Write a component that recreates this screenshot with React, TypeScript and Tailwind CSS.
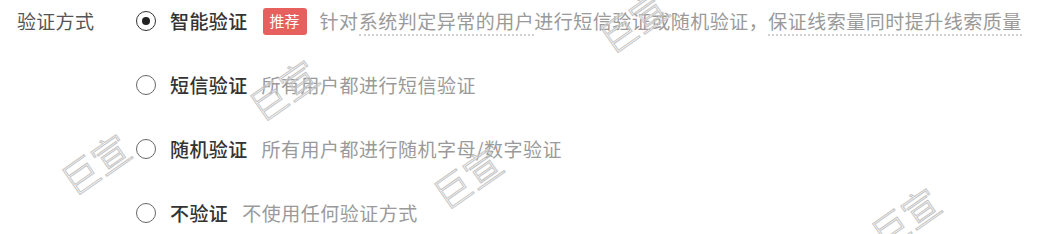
import React, {type ReactElement} from 'react';

type Option = {
    label: string;
    desc: React.ReactNode;
    checked?: boolean;
    badge?: string;
};

const Dotted = ({children}: {children: React.ReactNode}) => (
    <span className="border-b-2 border-dotted border-[#cfcfcf]">{children}</span>
);

const options: Option[] = [
    {
        label: '智能验证',
        checked: true,
        badge: '推荐',
        desc: (
            <>
                针对<Dotted>系统判定异常的用户</Dotted>进行短信验证或随机验证，
                <Dotted>保证线索量同时提升线索质量</Dotted>
            </>
        ),
    },
    {label: '短信验证', desc: '所有用户都进行短信验证'},
    {label: '随机验证', desc: '所有用户都进行随机字母/数字验证'},
    {label: '不验证', desc: '不使用任何验证方式'},
];

const Radio = ({checked}: {checked?: boolean}) => (
    <span
        className={`flex h-[20px] w-[20px] shrink-0 items-center justify-center rounded-full border-[1.5px] ${
            checked ? 'border-[#333]' : 'border-[#666]'
        }`}>
        {checked && <span className="h-[8px] w-[8px] rounded-full bg-[#222]" />}
    </span>
);

// watermark positions taken from the screenshot
const marks = [
    {left: 'left-[596px]', top: 'top-[-6px]'},
    {left: 'left-[246px]', top: 'top-[62px]'},
    {left: 'left-[58px]', top: 'top-[136px]'},
    {left: 'left-[430px]', top: 'top-[150px]'},
    {left: 'left-[868px]', top: 'top-[190px]'},
];

export default function App(): ReactElement {
    return (
        <div className="relative h-[234px] w-[1039px] overflow-hidden bg-white font-['Noto_Sans_CJK_SC','Noto_Sans',sans-serif]">
            <div className="flex pl-[17px]">
                <div className="flex h-[42px] w-[119px] shrink-0 items-center text-[19px] tracking-[0.3px] text-[#555]">
                    验证方式
                </div>
                <div className="flex flex-col gap-[22px]">
                    {options.map((o) => (
                        <div key={o.label} className="flex h-[42px] items-center whitespace-nowrap">
                            <Radio checked={o.checked} />
                            <span className="ml-[14px] text-[19px] font-medium tracking-[0.4px] text-[#333]">
                                {o.label}
                            </span>
                            {o.badge && (
                                <span className="ml-[15px] flex h-[27px] w-[44px] items-center justify-center rounded-[3px] bg-[#e6615e] text-[15px] text-white">
                                    {o.badge}
                                </span>
                            )}
                            <span
                                className={`${o.badge ? 'ml-[13px]' : 'ml-[14px]'} text-[19px] tracking-[0.5px] text-[#9a9a9a]`}>
                                {o.desc}
                            </span>
                        </div>
                    ))}
                </div>
            </div>

            {marks.map((m, i) => (
                <div
                    key={i}
                    className={`pointer-events-none absolute ${m.left} ${m.top} rotate-[-35deg] select-none text-[37px] font-light text-transparent [-webkit-text-stroke:1px_#c6c6c6]`}>
                    巨宣
                </div>
            ))}
        </div>
    );
}
